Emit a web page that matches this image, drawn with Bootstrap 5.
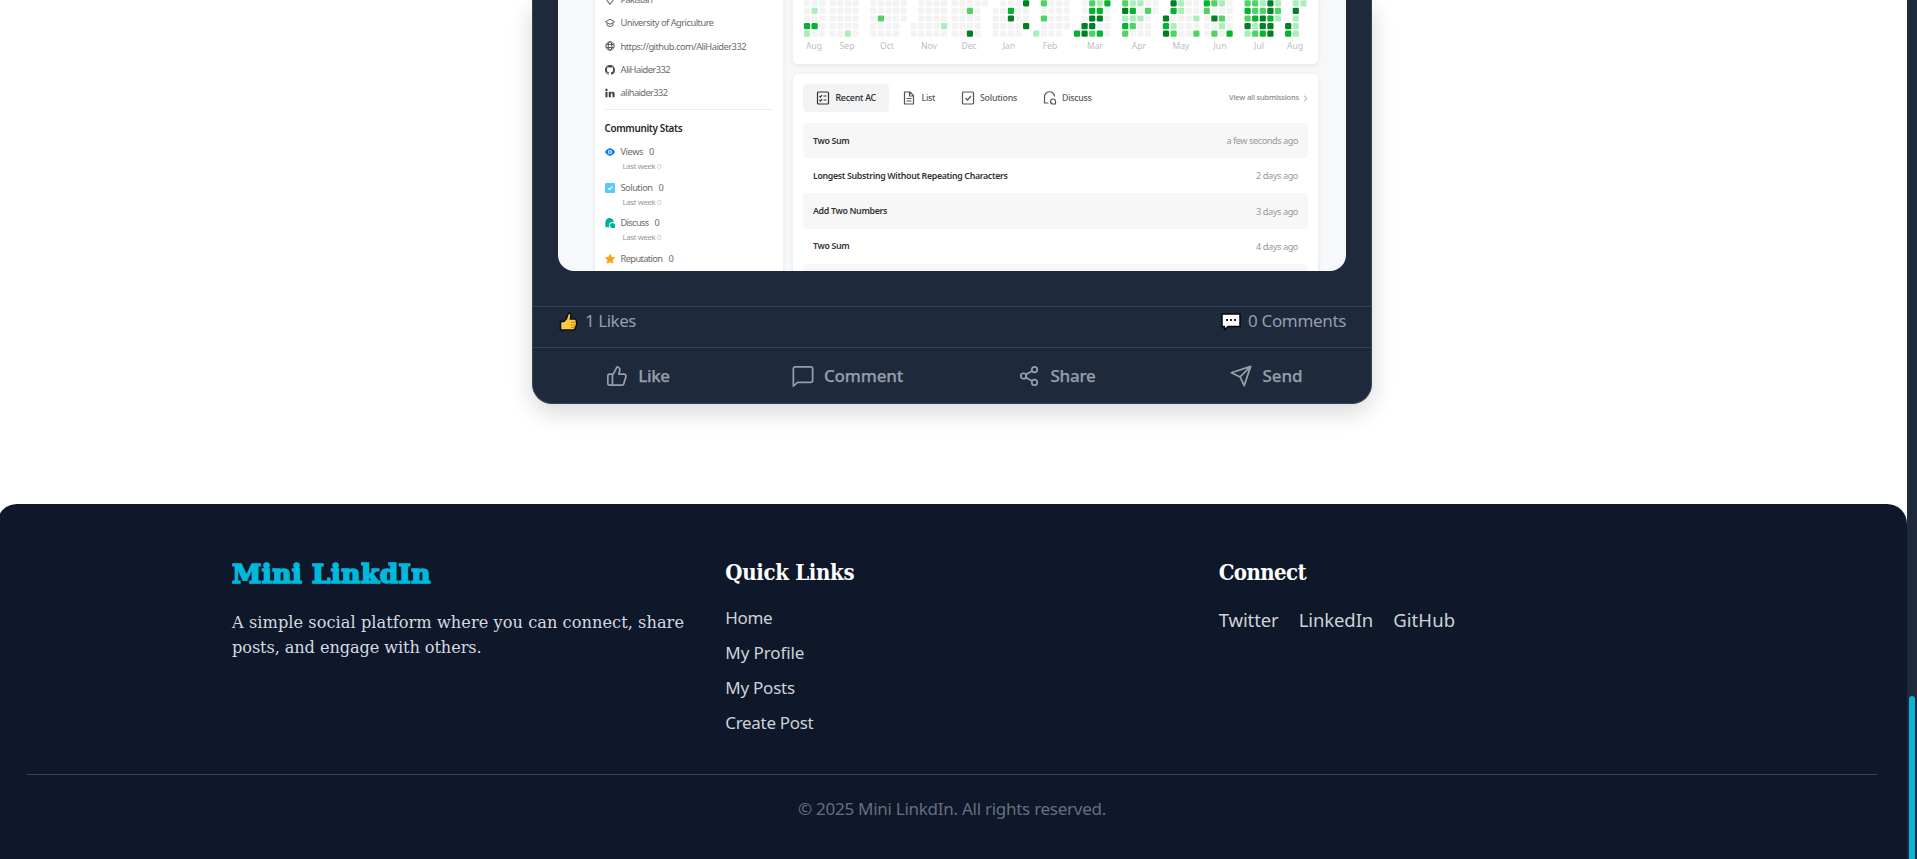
<!DOCTYPE html>
<html lang="en">
<head>
<meta charset="utf-8">
<title>Mini LinkdIn</title>
<link href="https://cdn.jsdelivr.net/npm/bootstrap@5.3.0/dist/css/bootstrap.min.css" rel="stylesheet">
<style>
body{font-family:"Noto Sans","Open Sans",sans-serif;background:#fff;height:859px;overflow:hidden}
.f{white-space:nowrap}
.post{width:840px;height:404px;margin-left:532px;background:#1e293b;border:1px solid #334155;border-top:0;border-radius:0 0 20px 20px;box-shadow:0 8px 24px rgba(0,0,0,.16);color:#949eac;font-size:17px}
.shot{margin:0 25px;height:271px;background:#f7f8fa;border-radius:0 0 16px 16px;font-size:9.3px;color:#6b6b6b}
.profile{width:188px;height:300px;margin:-12px 0 0 37px;padding:0 10px 0 9.5px;background:#fff;box-shadow:0 1px 5px rgba(0,0,0,.07)}
.info{height:23.4px;gap:6px}
.info svg,.stat svg{width:10px;height:10px;flex:none}
.profile hr{margin:4px 0 0;color:#bbb}
.profile h2{font-size:9.9px;font-weight:600;color:#262626;margin:0;line-height:36px}
.stat{height:14px;gap:6px;margin-top:-1px}
.wk{height:14px;line-height:14px;padding-left:18px;font-size:7.8px;color:#999;margin-bottom:8.6px}
.wk i{font-style:normal;color:#c8c8c8}
.feed{width:525px;margin-left:10px}
.pane{background:#fff;border-radius:0 0 5px 5px;box-shadow:0 1px 5px rgba(0,0,0,.09)}
.cal{height:64px}
.recent{margin-top:10px;height:240px;padding:10px;border-radius:5px}
.tabs{height:28px;font-weight:500;font-size:8.9px;color:#5c5c5c}
.tab{height:28px;gap:6.500px;padding-left:14px;margin-right:12.5px}
.tab.on{background:#f2f3f4;border-radius:4px;width:86px;margin-right:0;color:#262626}
.tab svg{width:12px;height:14px;overflow:visible}
.all{font-size:7.5px;color:#888}
.subs{margin-top:11px}
.sub{height:35.2px;padding:1px 10px 0;border-radius:4px;font-size:8.8px;font-weight:600;color:#333}
.sub:nth-child(odd){background:#f7f7f7}
.sub span+span{font-weight:400;color:#999;font-size:9.2px}
.counts{margin-top:35px;height:42px;border-top:1px solid #334155;border-bottom:1px solid #334155;padding:0 25px 13px}
.counts svg{margin:3px 7px 0 0}
.acts{height:56px;font-weight:500}
.acts svg{width:22px;height:22px;fill:none;stroke:#949eac;stroke-width:1.9;stroke-linecap:round;stroke-linejoin:round}
.acts>div{gap:10.5px}
.acts span{-webkit-text-stroke:.25px}
.foot{margin:100px 0 0 -3px;height:355px;background:#0f172a;border-radius:20px 20px 0 0;padding:55px 30px 0;color:#cdd2d9;font-size:17px}
.cols{width:1440px;display:grid;grid-template-columns:repeat(3,1fr);gap:40px;height:215px}
.slab{font-family:"DejaVu Serif","Liberation Serif",serif}
.logo{color:#00b8db;font-weight:700;font-size:26.5px;line-height:30px;-webkit-text-stroke:1.7px #00b8db}
.desc{font-size:16.2px;line-height:25px;color:#d5dae0;margin-top:20.5px}
.hd{font-size:22px;font-weight:700;font-stretch:condensed;line-height:26px;color:#fff}
.links{margin-top:14.5px}
.lnk{line-height:35px}
.social{margin-top:17px;gap:20px;line-height:35px;font-size:18.5px}
.copy{border-top:1px solid #334155;text-align:center;color:#64707f;line-height:68px}
.track{width:10px;background:#1e293b;height:859px;padding:696px 2px 0}
.thumb{width:6px;height:170px;border-radius:3px;background:#06b6d4}
</style>
</head>
<body class="d-flex">
<main class="flex-grow-1">
<article class="post">
<div class="shot d-flex overflow-hidden">
<section class="profile">
<div class="info d-flex align-items-center"><svg viewBox="0 0 24 24" fill="none" stroke="#666" stroke-width="2.5"><path d="M12 22C8 18 4 14 4 10a8 8 0 0 1 16 0c0 4-4 8-8 12z"/></svg><span class="f" data-w="32">Pakistan</span></div>
<div class="info d-flex align-items-center"><svg viewBox="0 0 24 24" fill="none" stroke="#666" stroke-width="2.4"><path d="M1 9 12 3l11 6-11 6zM5 12v6q7 5 14 0v-6"/></svg><span class="f" data-w="93">University of Agriculture</span></div>
<div class="info d-flex align-items-center"><svg viewBox="0 0 24 24" fill="none" stroke="#555" stroke-width="2.4"><circle cx="12" cy="12" r="10"/><ellipse cx="12" cy="12" rx="4.5" ry="10"/><path d="M3 8.5h18M3 15.5h18"/></svg><span class="f" data-w="125.5">https://github.com/AliHaider332</span></div>
<div class="info d-flex align-items-center"><svg viewBox="0 0 16 16" fill="#444"><path d="M8 0C3.580 0 0 3.580 0 8c0 3.540 2.290 6.530 5.470 7.590.4.070.55-.17.55-.38 0-.19-.01-.82-.01-1.490-2.010.37-2.530-.49-2.690-.94-.09-.23-.48-.94-.82-1.130-.28-.15-.68-.52-.01-.53.63-.01 1.080.58 1.230.82.72 1.210 1.870.87 2.330.66.070-.52.28-.87.51-1.070-1.780-.2-3.640-.89-3.640-3.950 0-.87.31-1.590.82-2.150-.08-.2-.36-1.020.08-2.120 0 0 .67-.21 2.200.82.64-.18 1.320-.27 2-.27s1.360.09 2 .27c1.530-1.040 2.200-.82 2.200-.82.44 1.100.16 1.920.08 2.120.51.56.82 1.270.82 2.150 0 3.070-1.870 3.750-3.650 3.950.29.25.54.73.54 1.480 0 1.070-.01 1.930-.01 2.200 0 .21.15.46.55.38A8.010 8.010 0 0 0 16 8c0-4.420-3.580-8-8-8z"/></svg><span class="f" data-w="49.5">AliHaider332</span></div>
<div class="info d-flex align-items-center"><svg viewBox="0 0 24 24" fill="#444"><path d="M1 9h5v13H1zM1 2h5v5H1zM9 9h5v2q5-5 9 1v10h-5v-8q-2-3-4 0v8H9z"/></svg><span class="f" data-w="47">alihaider332</span></div>
<hr>
<h2><span class="f" data-w="77.7">Community Stats</span></h2>
<div class="stat d-flex align-items-center"><svg viewBox="0 0 24 24"><path fill="#007aff" d="M0 12Q12-6 24 12 12 30 0 12z"/><circle cx="12" cy="12" r="3.5" fill="#007aff" stroke="#fff" stroke-width="2.5"/></svg><span class="f" data-w="22.5">Views</span><span>0</span></div>
<div class="wk"><span class="f" data-w="38.5">Last week <i>0</i></span></div>
<div class="stat d-flex align-items-center"><svg viewBox="0 0 24 24"><rect width="24" height="24" rx="3" fill="#5ac8fa"/><path d="m7 12 4 4 7-8" fill="none" stroke="#fff" stroke-width="2.5"/></svg><span class="f" data-w="32">Solution</span><span>0</span></div>
<div class="wk"><span class="f" data-w="38.5">Last week <i>0</i></span></div>
<div class="stat d-flex align-items-center"><svg viewBox="0 0 24 24" fill="#00af9b"><path d="M1 22V10a10 10 0 0 1 20 0h-6q-5 0-5 6v6z"/><path d="M12 17q0-5 6-5t6 6v6h-6q-6 0-6-7z"/></svg><span class="f" data-w="28">Discuss</span><span>0</span></div>
<div class="wk"><span class="f" data-w="38.5">Last week <i>0</i></span></div>
<div class="stat d-flex align-items-center"><svg viewBox="0 0 24 24"><path fill="#ffa116" stroke="#ffa116" stroke-width="2" stroke-linejoin="round" d="m12 1 3.500 7 7.500 1-5.500 5.500L19 22l-7-3.500L5 22l1.500-7.500L1 9l7.500-1z"/></svg><span class="f" data-w="42">Reputation</span><span>0</span></div>
</section>
<div class="feed">
<section class="pane cal"><svg id="heat" width="525" height="64" viewBox="793 0 525 64"></svg></section>
<section class="pane recent">
<div class="tabs d-flex align-items-center">
<div class="tab on d-flex align-items-center"><svg viewBox="1 0 24 28" fill="none" stroke="#333" stroke-width="2.4"><rect x="2" y="2" width="22" height="24" rx="2"/><path d="m6 10 2 2 3-4M14 10h6M6 18l2 2 3-4M14 18h6"/></svg><span class="f" data-w="40.5">Recent AC</span></div>
<div class="tab d-flex align-items-center"><svg viewBox="1 0 24 28" fill="none" stroke="#555" stroke-width="2.4"><path d="M4 2h11l7 7v17H4zM14 2v8h8M8 15h10M8 20h10"/></svg><span class="f" data-w="13.5">List</span></div>
<div class="tab d-flex align-items-center"><svg viewBox="1 0 24 28" fill="none" stroke="#555" stroke-width="2.4"><rect x="2" y="2" width="22" height="24" rx="2"/><path d="m8 14 4 4 7-8"/></svg><span class="f" data-w="37">Solutions</span></div>
<div class="tab d-flex align-items-center"><svg viewBox="1 0 24 28" fill="none" stroke="#555" stroke-width="2.4"><path d="M10 24H2V12a10 10 0 0 1 20-1M19 26h5v-6a5 5 0 1 0-5 6z"/></svg><span class="f" data-w="29.5">Discuss</span></div>
<span class="ms-auto f all" data-w="70">View all submissions</span><svg class="ms-1" width="5" height="7" viewBox="0 0 4 6" fill="none" stroke="#888" stroke-width=".7"><path d="m1 .5 2 2.500-2 2.500"/></svg>
</div>
<div class="subs">
<div class="sub d-flex align-items-center justify-content-between"><span class="f" data-w="36.5">Two Sum</span><span class="f" data-w="71.5">a few seconds ago</span></div>
<div class="sub d-flex align-items-center justify-content-between"><span class="f" data-w="194.5">Longest Substring Without Repeating Characters</span><span class="f" data-w="42">2 days ago</span></div>
<div class="sub d-flex align-items-center justify-content-between"><span class="f" data-w="74">Add Two Numbers</span><span class="f" data-w="42">3 days ago</span></div>
<div class="sub d-flex align-items-center justify-content-between"><span class="f" data-w="36.5">Two Sum</span><span class="f" data-w="42">4 days ago</span></div>
<div class="sub"></div>
</div>
</section>
</div>
</div>
<div class="counts d-flex justify-content-between align-items-center">
<div class="d-flex align-items-center"><svg width="20" height="20" viewBox="0 0 20 20"><path d="M2.500 9.500H6Q9 7 10 2q2-2 3 .5L12.500 7H17q2 1 1.300 3 1 1 0 2.500.5 1.500-1 2.500 0 3-2 3H2.500z" fill="#ffc83d" stroke="#0b0f17" stroke-width="1.600"/><path d="M13 10.300H18M13 13H18M13 15.500H17" stroke="#c98a14"/></svg><span class="f" data-w="51">1 Likes</span></div>
<div class="d-flex align-items-center"><svg width="20" height="18" viewBox="0 0 20 18"><path d="M1 1h18v12.500H7L3.500 17v-3.500H1z" fill="#fff" stroke="#05070b" stroke-width="1.500" stroke-linejoin="round"/><path d="M5 7h2M9 7h2M13 7h2" stroke="#222" stroke-width="2"/></svg><span class="f" data-w="98">0 Comments</span></div>
</div>
<div class="acts row g-0 align-items-center text-center">
<div class="col d-flex align-items-center justify-content-center"><svg viewBox="0 0 24 24"><path d="M7 10v12M15 5.880 14 10h5.830a2 2 0 0 1 1.920 2.560l-2.330 8A2 2 0 0 1 17.500 22H4a2 2 0 0 1-2-2v-8a2 2 0 0 1 2-2h2.760a2 2 0 0 0 1.790-1.110L12 2a3.130 3.130 0 0 1 3 3.880Z"/></svg><span class="f" data-w="31.5">Like</span></div>
<div class="col d-flex align-items-center justify-content-center"><svg viewBox="0 0 24 24"><path d="M1.500 4a2 2 0 0 1 2-2h17a2 2 0 0 1 2 2v13a2 2 0 0 1-2 2H6l-4.500 4z"/></svg><span class="f" data-w="79">Comment</span></div>
<div class="col d-flex align-items-center justify-content-center"><svg viewBox="0 0 24 24"><circle cx="18" cy="5" r="3"/><circle cx="6" cy="12" r="3"/><circle cx="18" cy="19" r="3"/><path d="m8.590 13.510 6.830 3.980M15.410 6.510l-6.820 3.980"/></svg><span class="f" data-w="45">Share</span></div>
<div class="col d-flex align-items-center justify-content-center"><svg viewBox="0 0 24 24"><path d="m22.500 1.500-7 21-4.500-9.500-9.500-4.500zM22 2 11 13"/></svg><span class="f" data-w="40">Send</span></div>
</div>
</article>
<footer class="foot">
<div class="cols mx-auto">
<div><div class="logo slab"><span class="f" data-w="199">Mini LinkdIn</span></div>
<div class="desc slab"><div class="f" data-w="452">A simple social platform where you can connect, share</div><div class="f" data-w="249.5">posts, and engage with others.</div></div></div>
<div><div class="hd slab"><span class="f" data-w="129">Quick Links</span></div>
<div class="links"><div class="lnk"><span class="f" data-w="47">Home</span></div><div class="lnk"><span class="f" data-w="79">My Profile</span></div><div class="lnk"><span class="f" data-w="69.5">My Posts</span></div><div class="lnk"><span class="f" data-w="88">Create Post</span></div></div></div>
<div><div class="hd slab"><span class="f" data-w="87.5">Connect</span></div>
<div class="social d-flex"><span class="f" data-w="60">Twitter</span><span class="f" data-w="74.5">LinkedIn</span><span class="f" data-w="62">GitHub</span></div></div>
</div>
<div class="copy"><span class="f" data-w="308">© 2025 Mini LinkdIn. All rights reserved.</span></div>
</footer>
</main>
<aside class="track"><div class="thumb"></div></aside>
<script src="https://cdn.jsdelivr.net/npm/bootstrap@5.3.0/dist/js/bootstrap.bundle.min.js"></script>
<script>
// Submission calendar: [first column x, label x, month, one string of intensities per week]
var months=[
[807,814,'Aug','00031 01030 00000'],[832.7,847,'Sep','00000 00000 00001 00000'],[873.3,887,'Oct','00000 00200 00000 00000 000..'],
[913.7,929,'Nov','...00 00000 00000 00000 00010'],[954.7,969,'Dec','00000 00000 02004 00000 0....'],[995.7,1009,'Jan','.0000 00000 03400 00000 4004.'],
[1036.3,1050,'Feb','....1 20200 00000 00000 0000.'],[1077,1095,'Mar','....3 00044 23442 13403 30000'],[1125.2,1139,'Apr','24132 13120 10100 02000 00...'],
[1166,1181,'May','..434 43012 11000 00000 00102'],[1206.8,1220,'Jun','32000 20402 10210 00003'],[1247.6,1259,'Jul','23241 22312 12443 44344 121..'],
[1288.2,1295,'Aug','...43 14111 1....']];
var fill=['#f3f3f3','#aceebb','#4ed364','#02b52c','#017f26'],s='';
months.forEach(function(m){
 m[3].split(' ').forEach(function(c,i){
  c.split('').forEach(function(v,r){if(v!=='.')s+='<rect x="'+(m[0]+i*7.6-3.1).toFixed(1)+'" y="'+(.2+r*7.6).toFixed(1)+'" width="6.2" height="6.2" rx="1.3" fill="'+fill[v]+'"/>';});
 });
 s+='<text x="'+m[1]+'" y="49" text-anchor="middle" font-size="8.6" fill="#bdbdbd">'+m[2]+'</text>';
});
document.getElementById('heat').innerHTML=s;
document.querySelectorAll('[data-w]').forEach(function(e){
 var r=document.createRange();r.selectNodeContents(e);
 e.style.letterSpacing=(e.dataset.w-r.getBoundingClientRect().width)/e.textContent.length+'px';
});
</script>
</body>
</html>
